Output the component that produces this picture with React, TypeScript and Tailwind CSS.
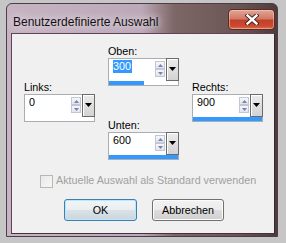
import React from "react";

type SpinBoxProps = { label: string; value: string; fill: number; selected?: boolean };

function SpinArrow({ up }: { up?: boolean }) {
  return (
    <div className="flex h-[8px] items-center justify-center border border-[#c3c7d3] bg-[linear-gradient(#f7f7f9,#e3e5ec)]">
      <svg width="5" height="3" viewBox="0 0 5 3">
        <path d={up ? "M0 3h5L2.5 0z" : "M0 0h5L2.5 3z"} fill="#7482b6" />
      </svg>
    </div>
  );
}

function SpinBox({ label, value, fill, selected }: SpinBoxProps) {
  return (
    <div className="flex flex-col">
      <span className="text-[10.75px] leading-[12px] text-black">{label}</span>
      <div className="mt-[1px] flex h-[28px] w-[71px] flex-col border border-[#abadb3] bg-white">
        <div className="flex h-[22px]">
          <div className="flex-1 pl-[4px] pt-[1px] text-[10.75px] leading-[13px] text-black">
            {selected ? <span className="inline-block bg-[#3399ff] pr-[1px] text-white">{value}</span> : value}
          </div>
          <div className="mt-[2px] flex h-[16px] w-[10px] flex-col">
            <SpinArrow up />
            <SpinArrow />
          </div>
          <div className="-mr-[1px] -mt-[1px] ml-[1px] flex h-[23px] w-[13px] justify-center border border-[#6b6b6b] bg-[linear-gradient(#ececec,#d2d2d2)] pt-[8px] shadow-[inset_1px_1px_0_#fff]">
            <svg width="7" height="4" viewBox="0 0 7 4">
              <path d="M0 0h7L3.5 4z" fill="#000" />
            </svg>
          </div>
        </div>
        <div className="h-[4px]">
          <div className="h-full bg-[#3399ff]" style={{ width: `${fill}%` }} />
        </div>
      </div>
    </div>
  );
}

export default function App() {
  return (
    <div className="h-[243px] w-[286px] overflow-hidden bg-[#c6c6c6] pl-[6px] pt-[3px] font-['Liberation_Sans',Arial,sans-serif]">
      <div className="flex h-[234px] w-[272px] flex-col rounded-t-[6px] border border-[#4d3c4a] bg-[linear-gradient(to_right,#c6b4c3_0%,#bba8b8_50%,#7d6666_62%,#6b5656_85%,#4e3c3c_100%)]">
        {/* title bar */}
        <div className="flex h-[29px] justify-between">
          <span className="ml-[6px] mt-[11px] text-[12px] leading-[14px] text-[#111] [text-shadow:0_0_6px_#e8dce6,0_0_10px_#e8dce6]">
            Benutzerdefinierte Auswahl
          </span>
          <div className="mr-[2px] mt-[5px] flex h-[21px] w-[47px] items-center justify-center rounded-[4px] border border-[#5e2a22] bg-[linear-gradient(#e2a596_0%,#d27a66_45%,#c0412a_55%,#cc4a30_85%,#e2714f_100%)] shadow-[inset_0_0_0_1px_rgba(255,220,210,0.45)]">
            <svg width="14" height="11" viewBox="0 0 14 11">
              <path d="M2.5 1.5L11.5 9.5M11.5 1.5L2.5 9.5" stroke="#3b1a16" strokeWidth="4.2" strokeLinecap="square" />
              <path d="M2.5 1.5L11.5 9.5M11.5 1.5L2.5 9.5" stroke="#fff" strokeWidth="2.4" strokeLinecap="square" />
            </svg>
          </div>
        </div>

        {/* client area */}
        <div className="ml-[4px] flex h-[201px] w-[264px] flex-col border border-[#5e4259] border-b-[#4f2c40] border-r-[#3d2a2e] bg-[#f0f0f0]">
          <div className="flex gap-[13px] pl-[12px] pt-[11px]">
            <div className="pt-[36px]">
              <SpinBox label="Links:" value="0" fill={0} />
            </div>
            <div className="flex flex-col gap-[33px]">
              <SpinBox label="Oben:" value="300" fill={50} selected />
              <SpinBox label="Unten:" value="600" fill={100} />
            </div>
            <div className="pt-[36px]">
              <SpinBox label="Rechts:" value="900" fill={100} />
            </div>
          </div>

          <label className="ml-[28px] mt-[15px] flex items-start gap-[3px]">
            <span className="h-[13px] w-[13px] border border-[#b8b8b8] bg-[linear-gradient(135deg,#e8e8e8,#f8f8f8)]" />
            <span className="-mt-[1px] text-[10.75px] leading-[12px] text-[#a0a0a0]">
              Aktuelle Auswahl als Standard verwenden
            </span>
          </label>

          <div className="ml-[52px] mt-[11px] flex gap-[15px]">
            <button
              type="button"
              className="h-[22px] w-[73px] rounded-[3px] border border-[#3c7fb1] bg-[linear-gradient(#f2f5f7_0%,#e9eef1_50%,#dbe2e7_51%,#cdd6dd_100%)] text-[10.75px] text-black shadow-[inset_0_0_0_1px_#b8e8fa]"
            >
              OK
            </button>
            <button
              type="button"
              className="h-[22px] w-[72px] rounded-[3px] border border-[#707070] bg-[linear-gradient(#f2f2f2_0%,#ebebeb_50%,#dddddd_51%,#cfcfcf_100%)] text-[10.75px] text-black shadow-[inset_0_0_0_1px_#fcfcfc]"
            >
              Abbrechen
            </button>
          </div>
        </div>
      </div>
    </div>
  );
}
